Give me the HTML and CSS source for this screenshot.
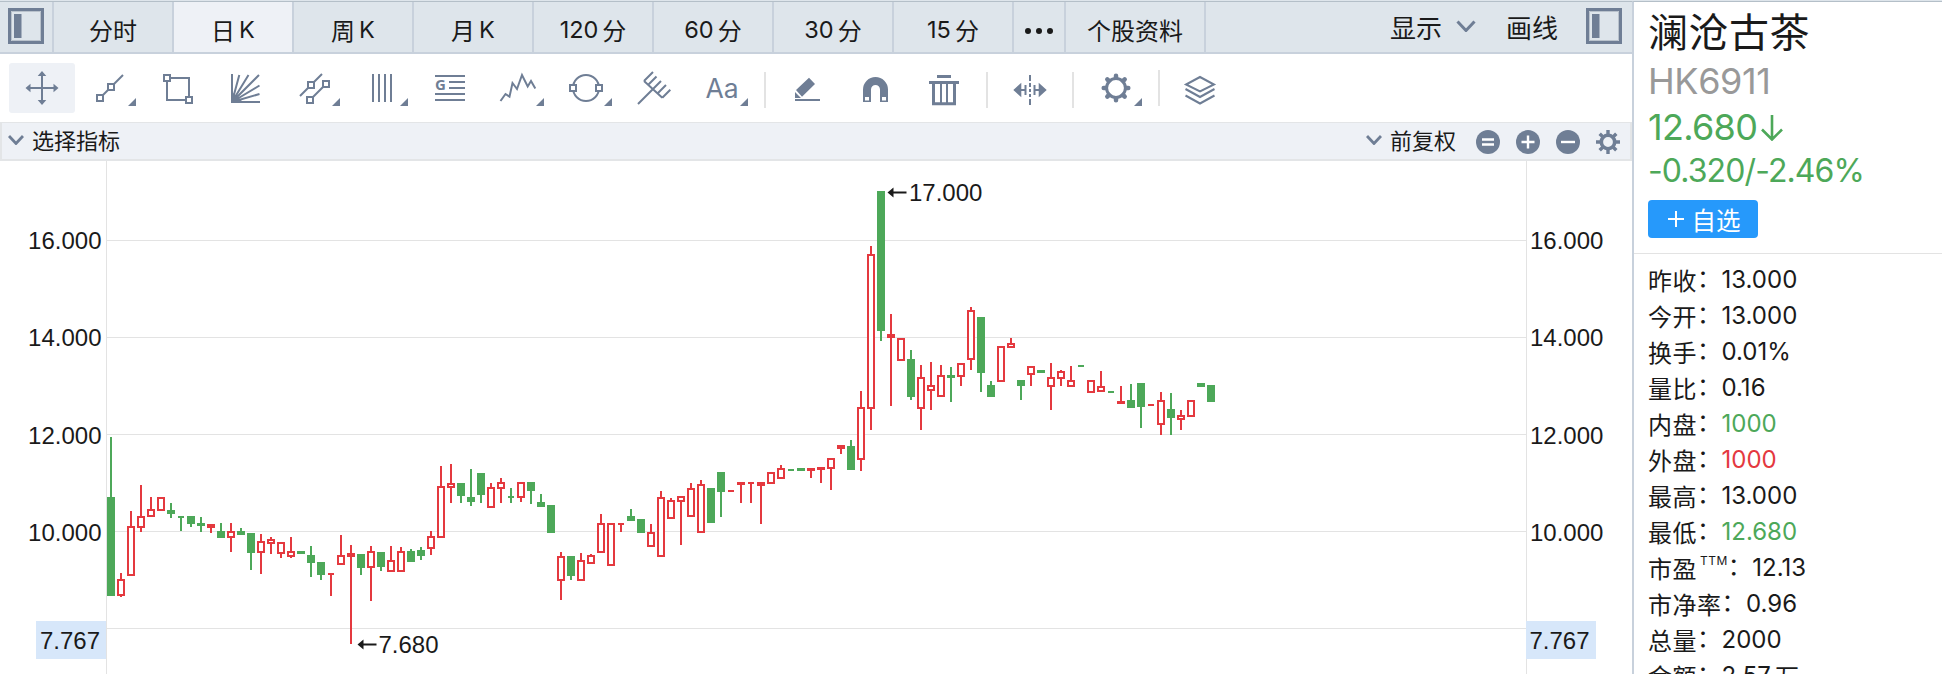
FILE: index.html
```html
<!DOCTYPE html>
<html lang="zh-CN">
<head>
    <meta charset="UTF-8">
    <meta name="viewport" content="width=device-width, initial-scale=1.0">
    <title>澜沧古茶 HK6911</title>
    <link rel="stylesheet" href="styles.css">
</head>
<body>
    <div class="main">
        <!-- Period tabs -->
        <div class="tabs">
            <div class="panel-toggle">
                <svg class="panel-icon" viewBox="0 0 36 36"><path class="thin" d="M3.5 3.5h29v29h-29z"/><path d="M1.5 1.5h33v33h-33z"/><rect x="6" y="6" width="7.5" height="24"/></svg>
            </div>
            <div class="tab">分时</div>
            <div class="tab active">日<span>K</span></div>
            <div class="tab">周<span>K</span></div>
            <div class="tab">月<span>K</span></div>
            <div class="tab"><span>120</span>分</div>
            <div class="tab"><span>60</span>分</div>
            <div class="tab"><span>30</span>分</div>
            <div class="tab"><span>15</span>分</div>
            <div class="tab more"><i></i><i></i><i></i></div>
            <div class="tab info">个股资料</div>
            <div class="tabs-right">
                <span>显示</span>
                <svg class="chevron big" viewBox="0 0 20 12"><path d="M1.5 1.5L10 10.5L18.5 1.5"/></svg>
                <span class="draw">画线</span>
                <svg class="panel-icon" viewBox="0 0 36 36"><path class="thin" d="M3.5 3.5h29v29h-29z"/><path d="M1.5 1.5h33v33h-33z"/><rect x="6" y="6" width="7.5" height="24"/></svg>
            </div>
        </div>

        <!-- Drawing tools -->
        <div class="tools">
            <svg class="tool" viewBox="0 0 68 50">
                <rect class="tool-bg" x="1" y="0" width="66" height="50" rx="3"/>
                <path d="M34 11v28M20 25h28"/>
                <path class="solid" d="M34 8l4.3 5h-8.6zM34 42l4.3-5h-8.6zM17.500 25l5-4.300v8.600zM50.500 25l-5-4.300v8.600z"/>
            </svg>
            <svg class="tool" viewBox="0 0 68 50">
                <path d="M24 35L47 12"/>
                <path class="box" d="M21 32h6v6h-6zM32 21h6v6h-6z"/>
                <path class="solid" d="M60 35v8h-8z"/>
            </svg>
            <svg class="tool" viewBox="0 0 68 50">
                <path d="M23 15h22v22h-22z"/>
                <path class="box" d="M20 12h6v6h-6zM42 34h6v6h-6z"/>
            </svg>
            <svg class="tool" viewBox="0 0 68 50">
                <path d="M20 11v29M19 39h29M20 39L27.300 12M20 39L36.500 12M20 39L47 12M20 39L47.500 22.500M20 39L47.500 31"/>
                <path class="solid" d="M20 29l11 10h-11z"/>
            </svg>
            <svg class="tool" viewBox="0 0 68 50">
                <path d="M20 33L42 11M30 37L46 21"/>
                <path class="box" d="M28 19h6v6h-6zM27 34h6v6h-6zM43 18h6v6h-6z"/>
                <path class="solid" d="M60 35v8h-8z"/>
            </svg>
            <svg class="tool" viewBox="0 0 68 50">
                <path d="M25 11v28M31 11v28M37 11v28M43 11v28"/>
                <path class="solid" d="M60 35v8h-8z"/>
            </svg>
            <svg class="tool" viewBox="0 0 68 50">
                <path d="M19 13h30M33 19h16M33 25h16M19 31h30M19 37h30"/>
                <text class="g" x="19" y="27">G</text>
            </svg>
            <svg class="tool" viewBox="0 0 68 50">
                <path d="M16.500 38L21.500 31L25.500 33.700L28.500 20L33 26L38 12L43.700 23.500L47 18L51.300 25.500"/>
                <path class="solid" d="M60 35v8h-8z"/>
            </svg>
            <svg class="tool" viewBox="0 0 68 50">
                <circle cx="34" cy="25" r="13"/>
                <path class="box" d="M18 22h6v6h-6zM44 22h6v6h-6z"/>
                <path class="solid" d="M60 35v8h-8z"/>
            </svg>
            <svg class="tool" viewBox="0 0 68 50">
                <path d="M18 41L41 18M24 18L42.300 34.700M24 18L33 9M28 22L36.500 13.500M37.500 30.500L46 22M42.300 34.700L50.300 26.700"/>
            </svg>
            <svg class="tool" viewBox="0 0 68 50">
                <text class="aa" x="17.500" y="35">Aa</text>
                <path class="solid" d="M60 35v8h-8z"/>
            </svg>
            <div class="sep"></div>
            <svg class="tool" viewBox="0 0 68 50">
                <path class="solid" d="M35 14.700L41 21L28 33.700L22 27zM21 29l6 6h-6z"/>
                <path d="M21 37h25"/>
            </svg>
            <svg class="tool" viewBox="0 0 68 50">
                <path class="solid" d="M21 39V26.500a12.500 12.500 0 0 1 25 0V39h-8V26.500a4.500 4.500 0 0 0-9 0V39z"/>
                <path class="white" d="M23 34h4v3.500h-4zM40 34h4v3.500h-4z"/>
            </svg>
            <svg class="tool" viewBox="0 0 68 50">
                <path class="solid" d="M27 12h14v3h-14zM19 18h30v3h-30z"/>
                <path class="thick" d="M23.500 20v20.700h21V20"/>
                <path d="M31 20v20M37 20v20"/>
            </svg>
            <div class="sep"></div>
            <svg class="tool" viewBox="0 0 68 50">
                <path d="M34 12v6M34 20v4M34 26v3M34 31v3M34 36v6M25 27h5M29.500 22v10M38 27h5M38.500 22v10"/>
                <path class="solid" d="M17.300 27l8-7.200v14.400zM50.700 27l-8-7.200v14.400z"/>
            </svg>
            <div class="sep"></div>
            <svg class="tool" viewBox="0 0 68 50">
                <circle class="thick" cx="34" cy="25" r="9.400"/>
                <path class="teeth" d="M34 12.700v2M34 35.300v2M21.700 25h2M44.300 25h2M25.300 16.300l1.500 1.500M41.200 32.200l1.500 1.500M25.300 33.700l1.500-1.500M41.200 17.800l1.500-1.500"/>
                <path class="solid" d="M60 35v8h-8z"/>
            </svg>
            <div class="sep last"></div>
            <svg class="tool" viewBox="0 0 68 50">
                <path d="M34 14L48 21.500L34 28.500L20 21.500zM19.500 26L34 34L48.500 26M19.500 32.500L34 40.500L48.500 32.500"/>
            </svg>
        </div>

        <!-- Indicator bar -->
        <div class="indicator">
            <svg class="chevron" viewBox="0 0 16 10"><path d="M1 1L8 8.500L15 1"/></svg>
            <span>选择指标</span>
            <svg class="chevron adjust" viewBox="0 0 16 10"><path d="M1 1L8 8.500L15 1"/></svg>
            <span class="fuquan">前复权</span>
            <svg class="round" viewBox="0 0 24 24"><circle cx="12" cy="12" r="12"/><path d="M6 9.500h12M6 14.500h12"/></svg>
            <svg class="round" viewBox="0 0 24 24"><circle cx="12" cy="12" r="12"/><path d="M5.500 12h13M12 5.500v13"/></svg>
            <svg class="round" viewBox="0 0 24 24"><circle cx="12" cy="12" r="12"/><path d="M5 12h14"/></svg>
            <svg class="round cog" viewBox="0 0 24 24"><path d="M12 0v5M12 19v5M0 12h5M19 12h5M3.700 3.700l3.300 3.300M17 17l3.300 3.300M3.700 20.300l3.300-3.300M17 7l3.300-3.300"/><circle cx="12" cy="12" r="6.700"/></svg>
        </div>

        <!-- Candles are added by chart.js -->
        <svg class="chart" id="chart" viewBox="0 161 1632 513"></svg>
    </div>

    <div class="side">
        <div class="quote">
            <div class="name">澜沧古茶</div>
            <div class="code">HK6911</div>
            <div class="price">12.680<svg viewBox="0 0 22 26"><path d="M11 0v24M1 14.500L11 24.500L21 14.500"/></svg></div>
            <div class="change">-0.320/-2.46%</div>
            <button class="add"><svg viewBox="0 0 16 16"><path d="M0 8h16M8 0v16"/></svg>自选</button>
        </div>
        <div class="stats">
            <div class="row">昨收<i>：</i><span>13.000</span></div>
            <div class="row">今开<i>：</i><span>13.000</span></div>
            <div class="row">换手<i>：</i><span>0.01%</span></div>
            <div class="row">量比<i>：</i><span>0.16</span></div>
            <div class="row">内盘<i>：</i><span class="down">1000</span></div>
            <div class="row">外盘<i>：</i><span class="up">1000</span></div>
            <div class="row">最高<i>：</i><span>13.000</span></div>
            <div class="row">最低<i>：</i><span class="down">12.680</span></div>
            <div class="row">市盈<sup>TTM</sup><i>：</i><span>12.13</span></div>
            <div class="row">市净率<i>：</i><span>0.96</span></div>
            <div class="row">总量<i>：</i><span>2000</span></div>
            <div class="row">金额<i>：</i><span>2.57</span><em>万</em></div>
        </div>
    </div>

    <script src="chart.js"></script>
</body>
</html>
```
FILE: styles.css
```css
* {
    margin: 0;
    padding: 0;
    box-sizing: border-box;
}

body {
    display: flex;
    width: 1942px;
    height: 674px;
    overflow: hidden;
    background: #fff;
    border-top: 1px solid #dee5eb;
    color: #1a1a1a;
    font-family: Inter, "Noto Sans CJK SC", sans-serif;
}

.main {
    width: 1632px;
    border-top: 1px solid #b4bfc8;
    display: flex;
    flex-direction: column;
}

/* Tabs */
.tabs {
    height: 52px;
    display: flex;
    background: #dee5eb;
    border-bottom: 2px solid #c8d1dc;
    font-size: 24px;
}

.panel-toggle {
    width: 54px;
    padding: 6px 0 0 8px;
    border-right: 2px solid #c8d1dc;
}

.panel-icon {
    display: block;
    width: 36px;
    height: 36px;
    fill: none;
    stroke: #6f7e95;
    stroke-width: 3;
}

.tabs-right .panel-icon {
    margin-bottom: 2px;
}

.panel-icon .thin {
    stroke: #b9c2cc;
    stroke-width: 1;
}

.panel-icon rect {
    fill: #6f7e95;
    stroke: none;
}

.tab {
    width: 120px;
    padding-top: 4px;
    border-right: 2px solid #c8d1dc;
    display: flex;
    justify-content: center;
    align-items: center;
    gap: 4px;
}

.tab span {
    font-size: 23.500px;
}

.tab.active {
    background: #eef1f6;
}

.tab.more {
    width: 52px;
    padding-top: 7px;
    gap: 5px;
}

.tab.more i {
    width: 6px;
    height: 6px;
    border-radius: 50%;
    background: #1a1a1a;
}

.tab.info {
    width: 140px;
}

.tabs-right {
    margin-left: auto;
    padding-right: 10px;
    display: flex;
    align-items: center;
    font-size: 26px;
}

.tabs-right span {
    margin-bottom: 2px;
}

.tabs-right .draw {
    margin-right: 28px;
    margin-left: 30px;
}

.chevron {
    width: 16px;
    height: 10px;
    fill: none;
    stroke: #6f7e95;
    stroke-width: 2.8;
}

.chevron.big {
    width: 20px;
    height: 12px;
    margin: 0 0 2px 14px;
    stroke-width: 3;
}

/* Tools */
.tools {
    height: 68px;
    padding: 9px 0 0 8px;
    display: flex;
}

.tool {
    width: 68px;
    height: 50px;
    fill: none;
    stroke: #6f7e95;
    stroke-width: 2;
}

.tool .tool-bg {
    fill: #eef1f6;
    stroke: none;
}

.tool .solid {
    fill: #6f7e95;
    stroke: none;
}

.tool .box {
    fill: #fff;
}

.tool .white {
    fill: #fff;
    stroke: none;
}

.tool .thick {
    stroke-width: 3;
}

.tool .teeth {
    stroke-width: 4.5;
    stroke-linecap: round;
}

.tool text {
    fill: #6f7e95;
    stroke: none;
}

.tool .g {
    font: bold 15px "Noto Sans", sans-serif;
}

.tool .aa {
    font: 26.500px Inter, sans-serif;
}

.sep {
    width: 2px;
    height: 36px;
    margin: 9px 8px 0;
    background: #e3e3e3;
}

.sep.last {
    margin: 7px 6px 0 8px;
}

/* Indicator bar */
.indicator {
    height: 39px;
    padding: 0 10px 3px 6px;
    display: flex;
    align-items: center;
    background: #eef1f6;
    border: 2px solid #e3e5e7;
    border-top-width: 1px;
    font-size: 22px;
}

.indicator span {
    margin: 0 0 2px 8px;
}

.indicator .adjust {
    margin-left: auto;
}

.indicator .fuquan {
    margin-right: 4px;
}

.round {
    width: 24px;
    height: 24px;
    margin: 5px 0 0 16px;
    fill: #6f7e95;
    stroke: #fff;
    stroke-width: 2.4;
}

.round circle {
    stroke: none;
}

.round.cog {
    fill: none;
    stroke: #6f7e95;
    stroke-width: 3.4;
}

.round.cog circle {
    stroke: #6f7e95;
    stroke-width: 3.6;
}

/* Chart */
.chart {
    width: 1632px;
    height: 513px;
    shape-rendering: crispEdges;
    font: 24px "Liberation Sans", Arial, sans-serif;
}

.chart text {
    fill: #1a1a1a;
}

.chart .grid {
    fill: #e3e3e3;
}

.chart .tag {
    fill: #d7e7fa;
}

.chart .up {
    fill: #e4393f;
}

.chart .down {
    fill: #4da859;
}

.chart .hollow {
    fill: #fff;
    stroke: #e4393f;
    stroke-width: 2;
}

.chart .arrow {
    fill: #1a1a1a;
    shape-rendering: auto;
}

/* Quote panel */
.side {
    width: 310px;
    border-top: 1px solid #b4bfc8;
    border-left: 2px solid #c8d1dc;
}

.quote {
    height: 252px;
    padding: 8px 0 0 14px;
    border-bottom: 1px solid #e3e3e3;
}

.name {
    height: 48px;
    line-height: 46px;
    font-size: 40px;
    letter-spacing: 0.5px;
}

.code {
    height: 46px;
    line-height: 46px;
    font-size: 36px;
    letter-spacing: -0.4px;
    color: #999;
}

.price {
    height: 47px;
    line-height: 47px;
    font-size: 36px;
    letter-spacing: -0.7px;
    color: #4da859;
    display: flex;
    align-items: center;
}

.price svg {
    width: 22px;
    height: 26px;
    margin-left: 4px;
    fill: none;
    stroke: #4da859;
    stroke-width: 2.6;
}

.change {
    height: 40px;
    line-height: 40px;
    font-size: 32px;
    letter-spacing: -0.9px;
    color: #4da859;
}

.add {
    width: 110px;
    height: 38px;
    margin-top: 9px;
    padding-left: 2px;
    display: flex;
    justify-content: center;
    align-items: center;
    gap: 8px;
    border: none;
    border-radius: 4px;
    background: #2699fb;
    color: #fff;
    font: 24.500px "Noto Sans CJK SC", sans-serif;
}

.add svg {
    width: 16px;
    height: 16px;
    stroke: #fff;
    stroke-width: 2;
}

.stats {
    padding: 7px 0 0 14px;
}

.row {
    height: 36px;
    display: flex;
    align-items: center;
    font-size: 24px;
    letter-spacing: 0.5px;
    white-space: nowrap;
}

.row span {
    padding-top: 1px;
    letter-spacing: 0;
}

.row i {
    margin-top: -6px;
    font-style: normal;
}

.row sup {
    margin: -12px 0 0 3px;
    font-size: 12px;
    line-height: 12px;
}

.row em {
    margin-left: 4px;
    font-style: normal;
}

.row .up {
    color: #e4393f;
}

.row .down {
    color: #4da859;
}
```
FILE: chart.js
```js
const chart = document.getElementById('chart');

// One candle per day: [direction, high, body top, body bottom, low]
const candles = [
    ['d', 437, 497, 596, 596], ['u', 573, 579, 596, 597], ['u', 511, 526, 576, 576], ['u', 485, 516, 528, 532],
    ['u', 497, 509, 517, 517], ['u', 497, 497, 511, 511], ['d', 503, 510, 514, 518], ['d', 516, 516, 518, 531],
    ['d', 516, 516, 524, 527], ['d', 517, 523, 526, 532], ['u', 524, 524, 528, 533], ['d', 523, 531, 538, 538],
    ['u', 523, 531, 538, 552], ['d', 528, 531, 535, 535], ['d', 533, 533, 553, 570], ['u', 534, 541, 553, 574],
    ['u', 537, 539, 544, 554], ['u', 542, 542, 554, 558], ['u', 537, 551, 557, 558], ['d', 551, 551, 554, 554],
    ['d', 546, 555, 563, 577], ['d', 562, 562, 575, 580], ['u', 573, 573, 575, 596], ['u', 535, 555, 565, 565],
    ['u', 545, 553, 557, 644], ['d', 554, 554, 568, 575], ['u', 546, 551, 568, 601], ['d', 552, 552, 567, 571],
    ['u', 546, 560, 572, 572], ['u', 547, 551, 572, 572], ['d', 549, 551, 562, 562], ['d', 547, 550, 556, 560],
    ['u', 531, 536, 549, 555], ['u', 466, 486, 538, 538], ['u', 464, 483, 488, 503], ['d', 483, 483, 496, 503],
    ['d', 469, 497, 502, 506], ['d', 473, 473, 495, 503], ['u', 483, 487, 508, 508], ['u', 478, 482, 489, 503],
    ['d', 488, 496, 498, 503], ['u', 482, 482, 498, 502], ['d', 482, 482, 491, 504], ['d', 494, 502, 507, 507],
    ['d', 505, 505, 533, 533], ['u', 552, 556, 581, 600], ['d', 556, 556, 576, 580], ['u', 553, 560, 581, 581],
    ['u', 554, 555, 564, 564], ['u', 514, 523, 553, 553], ['u', 523, 523, 566, 566], ['u', 523, 523, 525, 532],
    ['d', 509, 516, 521, 521], ['d', 519, 519, 533, 533], ['u', 524, 532, 547, 547], ['u', 491, 497, 557, 557],
    ['u', 498, 500, 519, 519], ['u', 496, 496, 502, 545], ['u', 483, 488, 517, 517], ['u', 480, 484, 533, 533],
    ['d', 488, 488, 523, 523], ['d', 472, 472, 492, 517], ['u', 490, 490, 492, 492], ['u', 482, 482, 485, 503],
    ['u', 482, 482, 484, 503], ['u', 482, 482, 486, 524], ['u', 472, 472, 484, 484], ['u', 465, 468, 479, 479],
    ['d', 469, 469, 471, 471], ['d', 468, 468, 471, 471], ['u', 468, 468, 471, 478], ['u', 467, 467, 470, 483],
    ['u', 458, 458, 469, 490], ['u', 445, 445, 449, 454], ['d', 440, 446, 470, 470], ['u', 391, 407, 460, 471],
    ['u', 246, 254, 409, 430], ['d', 191, 191, 331, 341], ['u', 314, 334, 338, 406], ['u', 338, 338, 361, 361],
    ['d', 350, 359, 397, 400], ['u', 365, 377, 409, 430], ['u', 362, 385, 391, 410], ['u', 365, 375, 397, 397],
    ['d', 367, 375, 378, 402], ['u', 363, 363, 377, 386], ['u', 307, 310, 360, 370], ['d', 317, 317, 373, 392],
    ['d', 381, 385, 397, 397], ['u', 346, 346, 382, 382], ['u', 338, 343, 348, 348], ['d', 380, 380, 386, 400],
    ['u', 366, 366, 375, 386], ['d', 370, 370, 373, 373], ['u', 363, 377, 387, 410], ['u', 370, 371, 379, 386],
    ['u', 366, 380, 387, 387], ['d', 365, 365, 367, 367], ['u', 380, 380, 393, 393], ['u', 371, 386, 392, 392],
    ['d', 391, 391, 393, 393], ['u', 386, 401, 404, 404], ['d', 384, 400, 408, 408], ['d', 383, 383, 407, 428],
    ['u', 404, 404, 406, 406], ['u', 392, 400, 425, 435], ['d', 393, 409, 418, 435], ['u', 410, 415, 420, 430],
    ['u', 400, 400, 417, 417], ['d', 383, 383, 387, 387], ['d', 385, 385, 402, 402]
];

function rect(cls, x, y, w, h) {
    return `<rect class="${cls}" x="${x}" y="${y}" width="${w}" height="${h}"/>`;
}

function label(x, y, text, anchor) {
    return `<text x="${x}" y="${y}" text-anchor="${anchor || 'start'}">${text}</text>`;
}

function arrow(x, y) {
    return `<path class="arrow" d="M${x} ${y}l6 -5v4h13v2h-13v4z"/>`;
}

let out = '';

// Grid lines with their axis labels: [line y, text baseline, text]
const levels = [[240, 249, '16.000'], [337, 346, '14.000'], [434, 444, '12.000'], [531, 541, '10.000'], [628, 0, '']];
levels.forEach(([y, base, text]) => {
    out += rect('grid', 107, y, 1419, 1);
    if (text) {
        out += label(101.5, base, text, 'end') + label(1530, base, text);
    }
});
out += rect('grid', 106, 161, 1, 513) + rect('grid', 1526, 161, 1, 513);

// Candles, 10px apart
candles.forEach(([dir, high, top, bottom, low], i) => {
    const x = 111 + i * 10;
    const cls = dir === 'u' ? 'up' : 'down';
    const h = bottom - top;
    out += rect(cls, x - 1, high, 2, low - high);
    if (h <= 2) {
        out += rect(cls, x - 3, top, 6, h);
    } else if (dir === 'u' && h > 4) {
        out += rect('hollow', x - 3, top + 1, 6, h - 2);
    } else {
        out += rect(cls, x - 4, top, 8, h);
    }
});

// High and low of the visible range
out += arrow(887.5, 192.5) + label(909, 201, '17.000');
out += arrow(357.5, 644.5) + label(378.5, 653, '7.680');

// Current price tags
out += rect('tag', 36, 621, 70, 38) + label(100, 649, '7.767', 'end');
out += rect('tag', 1526, 621, 70, 38) + label(1529.5, 649, '7.767');

chart.innerHTML = out;
```
